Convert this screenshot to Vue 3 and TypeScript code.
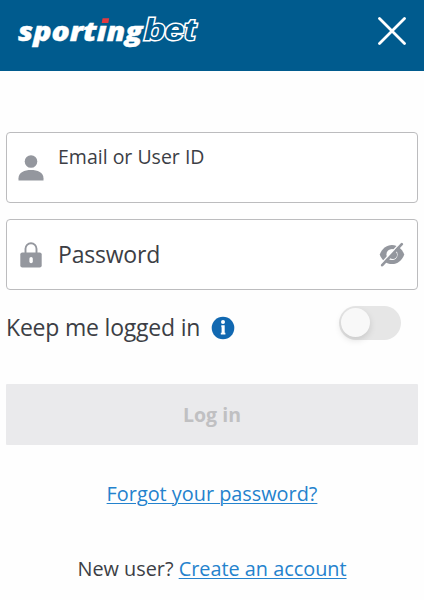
<script setup lang="ts">
import { ref } from 'vue'

const user = ref('')
const password = ref('')
const keepLoggedIn = ref(false)
</script>

<template>
  <main class="page">
    <header class="bar">
      <svg class="logo" width="190" height="44" viewBox="0 0 190 44" role="img" aria-label="sportingbet">
        <g class="word">
          <text class="solid" x="4" y="27.500" textLength="124.500" lengthAdjust="spacingAndGlyphs">sportıng</text>
          <text class="outline" x="130" y="27" textLength="51.500" lengthAdjust="spacingAndGlyphs">bet</text>
        </g>
        <path d="M88.600 5.200h6.600l-.9 4.700h-6.600z" fill="#e23b41" />
      </svg>
      <button class="close" type="button" aria-label="Close">
        <svg width="28" height="28" viewBox="0 0 28 28">
          <path d="M1.500 1.500l25 25M26.500 1.500l-25 25" stroke="#fff" stroke-width="2.800" stroke-linecap="round" />
        </svg>
      </button>
    </header>

    <form class="form" @submit.prevent>
      <label class="field">
        <svg class="icon" width="26" height="26" viewBox="0 0 26 26" fill="#94979e">
          <circle cx="13" cy="6.500" r="6.300" />
          <path d="M.5 25.500v-2.200C.5 17.500 6.500 15 13 15s12.500 2.500 12.500 8.300v2.200z" />
        </svg>
        <span class="label small">Email or User ID</span>
        <input v-model="user" class="input" type="text" />
      </label>

      <label class="field">
        <svg class="icon" width="26" height="26" viewBox="0 0 26 26">
          <path d="M7.500 12V6.800a5.500 5.500 0 0 1 11 0V12" fill="none" stroke="#94979e" stroke-width="1.900" />
          <rect x="2.300" y="10.500" width="21.400" height="15" rx="2" fill="#94979e" />
          <rect x="11.400" y="15" width="3.400" height="6.200" rx="1.700" fill="#fff" />
        </svg>
        <span class="label large">Password</span>
        <input v-model="password" class="input" type="password" />
        <svg class="eye" width="26" height="26" viewBox="0 0 26 26">
          <path d="M.7 12.500C3 6.500 7.500 2.900 13 2.900S23 6.500 25.300 12.500C23 18.500 18.500 22.100 13 22.100S3 18.500 .7 12.500z" fill="#94979e" />
          <circle cx="13" cy="12.500" r="5.600" fill="#fff" />
          <path d="M16.700 9.800a4 4 0 0 1-5.700 6.200z" fill="#94979e" />
          <path d="M1.700 22L21.300 1" stroke="#fff" stroke-width="1.500" />
          <path d="M3.200 23.200L22.800 2.200" stroke="#94979e" stroke-width="2.600" stroke-linecap="round" />
        </svg>
      </label>

      <div class="keep">
        <span class="keep-text">Keep me logged in</span>
        <svg class="info" width="24" height="24" viewBox="0 0 24 24">
          <circle cx="12" cy="12" r="11.300" fill="#1168b1" />
          <circle cx="12" cy="6" r="2" fill="#fff" />
          <path d="M10.300 9.300h3.400v7.500h.7v1.700H9.800v-1.700h.8v-5.600h-.3z" fill="#fff" />
        </svg>
        <button
          class="switch"
          :class="{ on: keepLoggedIn }"
          type="button"
          role="switch"
          :aria-checked="keepLoggedIn"
          aria-label="Keep me logged in"
          @click="keepLoggedIn = !keepLoggedIn"
        >
          <span class="knob"></span>
        </button>
      </div>

      <button class="submit" type="submit" disabled>Log in</button>
    </form>

    <p class="forgot"><a href="#">Forgot your password?</a></p>
    <p class="signup">New user? <a href="#">Create an account</a></p>
  </main>
</template>

<style>
body {
  margin: 0;
  background: #fefefe;
}
</style>

<style scoped>
.page {
  box-sizing: border-box;
  height: 600px;
  overflow: hidden;
  font-family: 'Open Sans', 'Noto Sans', sans-serif;
  color: #3c3e45;
}
.bar {
  box-sizing: border-box;
  display: flex;
  justify-content: space-between;
  height: 71px;
  padding: 13px 18px 0 14px;
  background: #005b8e;
}
.logo {
  overflow: visible;
}
.word {
  font-style: italic;
}
.solid {
  font-family: 'Open Sans', sans-serif;
  font-size: 26px;
  font-weight: 800;
  fill: #fff;
  stroke: #fff;
  stroke-width: 0.400px;
}
.outline {
  font-family: 'Liberation Sans', Arial, sans-serif;
  font-size: 30px;
  font-weight: 700;
  fill: #005b8e;
  stroke: #fff;
  stroke-width: 2.800px;
  stroke-linejoin: miter;
  paint-order: stroke;
}
.close {
  height: 28px;
  margin-top: 4px;
  padding: 0;
  border: 0;
  background: none;
}
.close svg {
  display: block;
}
.form {
  padding: 61px 6px 0;
}
.field {
  box-sizing: border-box;
  display: flex;
  align-items: center;
  height: 71px;
  margin-bottom: 16px;
  padding: 0 12px 0 11px;
  border: 1px solid #bcbcbe;
  border-radius: 4px;
  background: #fff;
}
.icon {
  flex: none;
  margin-right: 14px;
}
.label {
  flex: none;
  white-space: nowrap;
}
.small {
  margin-bottom: 23px;
  font-size: 19.500px;
}
.large {
  margin-bottom: 1px;
  font-size: 23px;
  letter-spacing: -0.200px;
}
.input {
  flex: 1;
  min-width: 0;
  padding: 0;
  border: 0;
  outline: 0;
  background: none;
}
.eye {
  flex: none;
}
.keep {
  display: flex;
  align-items: center;
  height: 44px;
  margin-top: -1px;
}
.keep-text {
  font-size: 23px;
  letter-spacing: -0.200px;
}
.info {
  margin: 2px 0 0 11px;
}
.switch {
  width: 62px;
  height: 34px;
  margin: 0 17px 9px auto;
  padding: 2px;
  border: 0;
  border-radius: 17px;
  background: #e6e6e6;
}
.knob {
  display: block;
  width: 29px;
  height: 29px;
  border-radius: 50%;
  background: #f8f8f8;
  box-shadow: 0 3px 7px rgba(0, 0, 0, 0.13);
}
.switch.on .knob {
  margin-left: auto;
}
.submit {
  display: block;
  width: 100%;
  height: 61px;
  margin-top: 35px;
  padding: 0;
  border: 0;
  border-radius: 1px;
  background: #eaeaec;
  color: #c0c0c2;
  font: 700 19.500px 'Open Sans', sans-serif;
}
.forgot,
.signup {
  margin: 0;
  text-align: center;
  font-size: 19.850px;
  line-height: 28px;
}
.forgot {
  margin-top: 35px;
}
.signup {
  margin-top: 47px;
}
a {
  color: #2482cd;
  text-underline-offset: 2px;
  text-decoration-thickness: 1px;
}
</style>
